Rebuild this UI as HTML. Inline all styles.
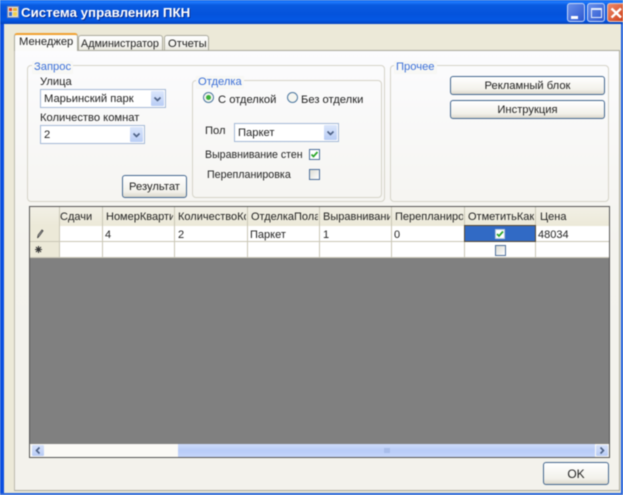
<!DOCTYPE html>
<html><head><meta charset="utf-8"><style>
*{box-sizing:border-box}
html,body{margin:0;padding:0;width:623px;height:495px;overflow:hidden;background:#ece9d8}
body{font-family:"Liberation Sans",sans-serif;font-size:11.2px;color:#222;position:relative}
#w{position:absolute;left:0;top:0;width:623px;height:495px;filter:blur(.4px)}
.a,.t{position:absolute;white-space:nowrap}
.t{line-height:13px;margin-top:1px}
.blue{color:#3b6fd8;background:#f8f8f5;padding:0 2px}
.grp{position:absolute;border:1px solid #d5d3c8;border-radius:4px}
.combo{position:absolute;background:#fff;border:1px solid #a5b9d6}
.combo span{position:absolute;left:3px;top:3px;line-height:13px;font-size:11.2px}
.arr{position:absolute;right:1px;top:1px;bottom:1px;width:13px;background:linear-gradient(#dbe6fb,#b9cdf5);border-radius:1px}
.arr svg{position:absolute;left:2px;top:5px}
.btn{position:absolute;border:1px solid #44678f;border-radius:3px;background:linear-gradient(#fff,#f2f1ea 75%,#dcd8cc);text-align:center;color:#222}
.cb{position:absolute;width:11px;height:11px;border:1px solid #4e6f9a;background:linear-gradient(135deg,#dcdcd4,#fff)}
.rad{position:absolute;width:11px;height:11px;border:1px solid #4e78a0;border-radius:50%;background:#f6f6f0}
.hl{position:absolute;top:0;width:1px;background:#cac7b6}
.h{position:absolute;top:210px;line-height:14px;overflow:hidden;white-space:nowrap;font-size:11px}
.c{position:absolute;top:229px;line-height:13px;font-size:11px}
</style></head><body><div id="w">
<!-- title bar -->
<div class="a" style="left:0;top:0;width:623px;height:24px;background:linear-gradient(#0a5fe6 0,#1f7bff 2px,#0a5be0 5px,#0453dc 14px,#0558e4 20px,#0342bd 24px)"></div>
<div class="a" style="left:0;top:24px;width:4px;height:471px;background:#0c4fe0"></div>
<div class="a" style="left:621px;top:24px;width:2px;height:471px;background:#1a5ce0"></div>
<div class="a" style="left:0;top:493px;width:623px;height:2px;background:#2a66dc"></div>
<svg class="a" style="left:7px;top:6px" width="12" height="12"><rect x="0.5" y="0.5" width="11" height="11" fill="#e8e4d8" stroke="#7a88b0"/><rect x="2" y="2" width="3" height="3" fill="#d8402a"/><rect x="6" y="2" width="4" height="3" fill="#e8b030"/><rect x="2" y="6" width="3" height="4" fill="#3a70d0"/><rect x="6" y="6" width="4" height="4" fill="#f0d050"/></svg>
<div class="t" style="left:21px;top:3px;font-size:13.3px;line-height:18px;font-weight:bold;color:#fff;text-shadow:1px 1px 0 #0a2f90">Система управления ПКН</div>
<!-- window buttons -->
<div class="a" style="left:567px;top:3px;width:18px;height:19px;border:1px solid #c8d8f8;border-radius:3px;background:linear-gradient(135deg,#6a90ea,#2c58d0)"><div class="a" style="left:3px;top:12px;width:7px;height:3px;background:#fff"></div></div>
<div class="a" style="left:587px;top:3px;width:18px;height:19px;border:1px solid #c8d8f8;border-radius:3px;background:linear-gradient(135deg,#6a90ea,#2c58d0)"><div class="a" style="left:3px;top:4px;width:11px;height:10px;border:1px solid #e8effc;border-top-width:2px"></div></div>
<div class="a" style="left:607px;top:3px;width:16px;height:19px;border:1px solid #f0c8b8;border-right:0;border-radius:3px 0 0 3px;background:linear-gradient(135deg,#ec8a6a,#d0401a)"><svg class="a" style="left:2px;top:3px" width="13" height="12"><path d="M1.5 1.5L11 10.5M11 1.5L1.5 10.5" stroke="#fff" stroke-width="2.4"/></svg></div>
<!-- tab panel -->
<div class="a" style="left:14px;top:50px;width:606px;height:441px;background:linear-gradient(#fcfcfe,#f4f3ee 45%,#f3f2ec);border:1px solid #a9a89c;border-left-color:#bcbbb0"></div>
<div class="a" style="left:14px;top:33px;width:64px;height:18px;background:#fbfbf9;border:1px solid #a9a89c;border-top:2px solid #f0a030;border-bottom:0;border-radius:3px 3px 0 0"></div>
<div class="a" style="left:78px;top:35px;width:85px;height:16px;background:linear-gradient(#fff,#ecebe2);border:1px solid #a9a89c;border-radius:3px 3px 0 0"></div>
<div class="a" style="left:164px;top:35px;width:45px;height:16px;background:linear-gradient(#fff,#ecebe2);border:1px solid #a9a89c;border-radius:3px 3px 0 0"></div>
<div class="t" style="left:19px;top:35px">Менеджер</div>
<div class="t" style="left:81px;top:37px;font-size:10.8px">Администратор</div>
<div class="t" style="left:168px;top:37px">Отчеты</div>
<!-- Zapros -->
<div class="grp" style="left:27px;top:65px;width:358px;height:137px"></div>
<div class="t blue" style="left:32px;top:60px">Запрос</div>
<div class="t" style="left:40px;top:75px">Улица</div>
<div class="combo" style="left:40px;top:89px;width:126px;height:19px"><span>Марьинский парк</span><div class="arr"><svg width="9" height="7"><path d="M1.5 1.5L4.5 4.5L7.5 1.5" fill="none" stroke="#4d6185" stroke-width="1.6"/></svg></div></div>
<div class="t" style="left:40px;top:111px">Количество комнат</div>
<div class="combo" style="left:40px;top:125px;width:105px;height:19px"><span>2</span><div class="arr"><svg width="9" height="7"><path d="M1.5 1.5L4.5 4.5L7.5 1.5" fill="none" stroke="#4d6185" stroke-width="1.6"/></svg></div></div>
<div class="btn" style="left:122px;top:175px;width:65px;height:23px;line-height:23px">Результат</div>
<!-- Otdelka -->
<div class="grp" style="left:192px;top:80px;width:190px;height:118px"></div>
<div class="t blue" style="left:196px;top:75px">Отделка</div>
<div class="rad" style="left:203px;top:92px"><div class="a" style="left:2px;top:2px;width:5px;height:5px;border-radius:50%;background:#3bb03b"></div></div>
<div class="t" style="left:218px;top:93px">С отделкой</div>
<div class="rad" style="left:287px;top:92px"></div>
<div class="t" style="left:301px;top:93px">Без отделки</div>
<div class="t" style="left:205px;top:124px">Пол</div>
<div class="combo" style="left:234px;top:123px;width:105px;height:19px"><span>Паркет</span><div class="arr"><svg width="9" height="7"><path d="M1.5 1.5L4.5 4.5L7.5 1.5" fill="none" stroke="#4d6185" stroke-width="1.6"/></svg></div></div>
<div class="t" style="left:205px;top:148px;font-size:10.6px">Выравнивание стен</div>
<div class="cb" style="left:309px;top:149px;background:#fff"><svg class="a" style="left:0;top:0" width="9" height="9"><path d="M1.5 4.5L3.5 6.5L7.5 2" fill="none" stroke="#2aa52a" stroke-width="1.7"/></svg></div>
<div class="t" style="left:207px;top:168px;font-size:10.7px">Перепланировка</div>
<div class="cb" style="left:309px;top:169px"></div>
<!-- Prochee -->
<div class="grp" style="left:390px;top:65px;width:219px;height:137px"></div>
<div class="t blue" style="left:394px;top:60px">Прочее</div>
<div class="btn" style="left:450px;top:76px;width:155px;height:19px;line-height:19px">Рекламный блок</div>
<div class="btn" style="left:450px;top:100px;width:155px;height:19px;line-height:19px">Инструкция</div>
<!-- grid -->
<div class="a" style="left:29px;top:206px;width:581px;height:252px;background:#808080;border:1px solid #555"></div>
<div class="a" style="left:30px;top:207px;width:579px;height:19px;background:linear-gradient(#f2f0e6,#ece9d8)"></div>
<div class="a" style="left:30px;top:226px;width:29px;height:32px;background:#ece9d8"></div>
<div class="a" style="left:59px;top:226px;width:550px;height:32px;background:#fff"></div>
<div class="a" style="left:30px;top:241px;width:579px;height:1px;background:#cac7b6"></div>
<div class="a" style="left:30px;top:257px;width:579px;height:1px;background:#cac7b6"></div>
<div class="hl" style="left:59px;top:207px;height:51px"></div>
<div class="hl" style="left:102px;top:207px;height:51px"></div>
<div class="hl" style="left:174px;top:207px;height:51px"></div>
<div class="hl" style="left:247px;top:207px;height:51px"></div>
<div class="hl" style="left:319px;top:207px;height:51px"></div>
<div class="hl" style="left:391px;top:207px;height:51px"></div>
<div class="hl" style="left:464px;top:207px;height:51px"></div>
<div class="hl" style="left:535px;top:207px;height:51px"></div>
<div class="h" style="left:60px;width:42px">Сдачи</div>
<div class="h" style="left:106px;width:67px">НомерКвартиры</div>
<div class="h" style="left:178px;width:68px">КоличествоКомнат</div>
<div class="h" style="left:251px;width:67px">ОтделкаПола</div>
<div class="h" style="left:323px;width:67px">ВыравниваниеСтен</div>
<div class="h" style="left:395px;width:68px">Перепланировка</div>
<div class="h" style="left:468px;width:66px">ОтметитьКак</div>
<div class="h" style="left:540px;width:60px">Цена</div>
<svg class="a" style="left:35px;top:228px" width="10" height="12"><path d="M2.5 10L3.2 7L7 2L8 2.8L4.3 8Z" fill="#ccc" stroke="#444" stroke-width=".9"/></svg>
<svg class="a" style="left:34px;top:245px" width="9" height="9"><path d="M4.5 1V8M1 4.5H8M2 2L7 7M7 2L2 7" stroke="#333" stroke-width="1.1"/></svg>
<div class="c" style="left:105px">4</div>
<div class="c" style="left:178px">2</div>
<div class="c" style="left:250px">Паркет</div>
<div class="c" style="left:323px">1</div>
<div class="c" style="left:394px">0</div>
<div class="a" style="left:464px;top:225px;width:72px;height:17px;background:#316ac5;border:1px solid #5a4a30"></div>
<div class="cb" style="left:495px;top:229px;width:10px;height:10px;background:#fff;border-color:#b8c8dc"><svg class="a" style="left:0;top:0" width="8" height="8"><path d="M1 4L3 6L7 1.5" fill="none" stroke="#2aa52a" stroke-width="1.7"/></svg></div>
<div class="c" style="left:538px">48034</div>
<div class="cb" style="left:495px;top:245px"></div>
<!-- scrollbar -->
<div class="a" style="left:30px;top:444px;width:579px;height:13px;background:#fbfaf6"></div>
<div class="a" style="left:178px;top:444px;width:417px;height:13px;background:linear-gradient(#cfdcfb,#b8ccf8 50%,#c6d6fa)"></div>
<div class="a" style="left:384px;top:448px;width:6px;height:5px;background:#a8bdea"></div>
<div class="a" style="left:32px;top:445px;width:12px;height:11px;background:linear-gradient(#d6e2fb,#b8ccf5);border-radius:1px"><svg class="a" style="left:2px;top:1px" width="8" height="9"><path d="M5.5 1.5L2.5 4.5L5.5 7.5" fill="none" stroke="#4d6185" stroke-width="1.6"/></svg></div>
<div class="a" style="left:596px;top:445px;width:12px;height:11px;background:linear-gradient(#d6e2fb,#b8ccf5);border-radius:1px"><svg class="a" style="left:2px;top:1px" width="8" height="9"><path d="M2.5 1.5L5.5 4.5L2.5 7.5" fill="none" stroke="#4d6185" stroke-width="1.6"/></svg></div>
<!-- OK -->
<div class="btn" style="left:543px;top:462px;width:66px;height:23px;line-height:23px;font-size:12px">OK</div>
</div></body></html>
